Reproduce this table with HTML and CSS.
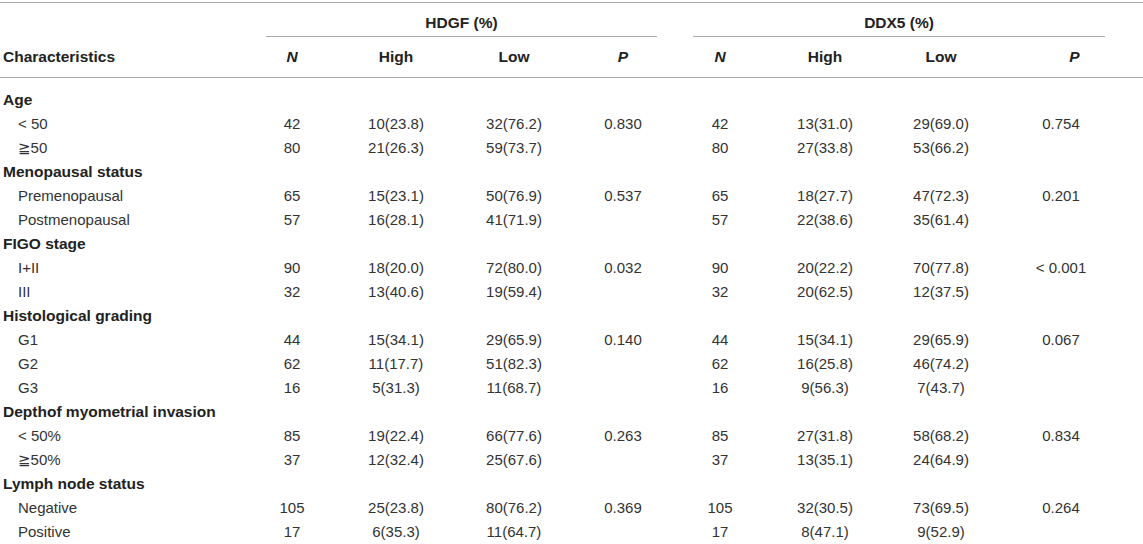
FILE: index.html
```html
<!DOCTYPE html>
<html lang="en">
  <head>
    <meta charset="UTF-8" />
    <meta name="viewport" content="width=device-width, initial-scale=1.0" />
    <title>HDGF and DDX5 expression</title>
    <link rel="stylesheet" href="styles.css">
  </head>
  <body>
    <table class="stats">
      <colgroup>
        <col class="col-char" />
        <col class="col-n1" />
        <col class="col-high1" />
        <col class="col-low1" />
        <col class="col-p1" />
        <col class="col-n2" />
        <col class="col-high2" />
        <col class="col-low2" />
        <col class="col-p2" />
      </colgroup>
      <thead>
        <tr class="group-row">
          <th></th>
          <th colspan="4"><div class="group group-hdgf">HDGF (%)</div></th>
          <th colspan="4"><div class="group group-ddx5">DDX5 (%)</div></th>
        </tr>
        <tr class="head-row">
          <th class="label">Characteristics</th>
          <th><em>N</em></th>
          <th>High</th>
          <th>Low</th>
          <th><em>P</em></th>
          <th><em>N</em></th>
          <th>High</th>
          <th>Low</th>
          <th class="last"><em>P</em></th>
        </tr>
      </thead>
      <tbody>
        <tr class="section first">
          <td class="label" colspan="9">Age</td>
        </tr>
        <tr>
          <td class="sub">&lt; 50</td>
          <td>42</td><td>10(23.8)</td><td>32(76.2)</td><td>0.830</td>
          <td>42</td><td>13(31.0)</td><td>29(69.0)</td><td class="last">0.754</td>
        </tr>
        <tr>
          <td class="sub">&#8807;50</td>
          <td>80</td><td>21(26.3)</td><td>59(73.7)</td><td></td>
          <td>80</td><td>27(33.8)</td><td>53(66.2)</td><td class="last"></td>
        </tr>

        <tr class="section">
          <td class="label" colspan="9">Menopausal status</td>
        </tr>
        <tr>
          <td class="sub">Premenopausal</td>
          <td>65</td><td>15(23.1)</td><td>50(76.9)</td><td>0.537</td>
          <td>65</td><td>18(27.7)</td><td>47(72.3)</td><td class="last">0.201</td>
        </tr>
        <tr>
          <td class="sub">Postmenopausal</td>
          <td>57</td><td>16(28.1)</td><td>41(71.9)</td><td></td>
          <td>57</td><td>22(38.6)</td><td>35(61.4)</td><td class="last"></td>
        </tr>

        <tr class="section">
          <td class="label" colspan="9">FIGO stage</td>
        </tr>
        <tr>
          <td class="sub">I+II</td>
          <td>90</td><td>18(20.0)</td><td>72(80.0)</td><td>0.032</td>
          <td>90</td><td>20(22.2)</td><td>70(77.8)</td><td class="last">&lt; 0.001</td>
        </tr>
        <tr>
          <td class="sub">III</td>
          <td>32</td><td>13(40.6)</td><td>19(59.4)</td><td></td>
          <td>32</td><td>20(62.5)</td><td>12(37.5)</td><td class="last"></td>
        </tr>

        <tr class="section">
          <td class="label" colspan="9">Histological grading</td>
        </tr>
        <tr>
          <td class="sub">G1</td>
          <td>44</td><td>15(34.1)</td><td>29(65.9)</td><td>0.140</td>
          <td>44</td><td>15(34.1)</td><td>29(65.9)</td><td class="last">0.067</td>
        </tr>
        <tr>
          <td class="sub">G2</td>
          <td>62</td><td>11(17.7)</td><td>51(82.3)</td><td></td>
          <td>62</td><td>16(25.8)</td><td>46(74.2)</td><td class="last"></td>
        </tr>
        <tr>
          <td class="sub">G3</td>
          <td>16</td><td>5(31.3)</td><td>11(68.7)</td><td></td>
          <td>16</td><td>9(56.3)</td><td>7(43.7)</td><td class="last"></td>
        </tr>

        <tr class="section">
          <td class="label" colspan="9">Depthof myometrial invasion</td>
        </tr>
        <tr>
          <td class="sub">&lt; 50%</td>
          <td>85</td><td>19(22.4)</td><td>66(77.6)</td><td>0.263</td>
          <td>85</td><td>27(31.8)</td><td>58(68.2)</td><td class="last">0.834</td>
        </tr>
        <tr>
          <td class="sub">&#8807;50%</td>
          <td>37</td><td>12(32.4)</td><td>25(67.6)</td><td></td>
          <td>37</td><td>13(35.1)</td><td>24(64.9)</td><td class="last"></td>
        </tr>

        <tr class="section">
          <td class="label" colspan="9">Lymph node status</td>
        </tr>
        <tr>
          <td class="sub">Negative</td>
          <td>105</td><td>25(23.8)</td><td>80(76.2)</td><td>0.369</td>
          <td>105</td><td>32(30.5)</td><td>73(69.5)</td><td class="last">0.264</td>
        </tr>
        <tr>
          <td class="sub">Positive</td>
          <td>17</td><td>6(35.3)</td><td>11(64.7)</td><td></td>
          <td>17</td><td>8(47.1)</td><td>9(52.9)</td><td class="last"></td>
        </tr>
      </tbody>
    </table>
  </body>
</html>
```

FILE: styles.css
```css
body {
  margin: 0;
  padding: 2px 0 0;
  background-color: #fff;
  font-family: "Liberation Sans", Arial, "DejaVu Sans", sans-serif;
  font-size: 15px;
  color: #333;
}

.stats {
  width: 1143px;
  table-layout: fixed;
  border-collapse: collapse;
  border-top: 1px solid #ababab;
}

.col-char { width: 240px; }
.col-n1 { width: 104px; }
.col-high1 { width: 104px; }
.col-low1 { width: 132px; }
.col-p1 { width: 86px; }
.col-n2 { width: 108px; }
.col-high2 { width: 102px; }
.col-low2 { width: 130px; }
.col-p2 { width: 137px; }

th,
td {
  padding: 0;
  text-align: center;
  white-space: nowrap;
  line-height: 18px;
}

th {
  font-size: 15.5px;
  font-weight: bold;
  color: #222;
}

th em {
  font-style: italic;
}

/* first header row: group titles with short rules */
.group-row th {
  padding-top: 11px;
  vertical-align: bottom;
}

.group {
  padding-bottom: 4px;
  border-bottom: 1px solid #ababab;
}

.group-hdgf {
  margin: 0 9px 0 26px;
}

.group-ddx5 {
  margin: 0 38px 0 27px;
}

.head-row th {
  padding: 11px 0;
  border-bottom: 1px solid #ababab;
}

.head-row .label,
.label {
  text-align: left;
  padding-left: 3px;
}

.section .label {
  font-size: 15.5px;
  font-weight: bold;
  color: #222;
}

td {
  height: 24px;
  line-height: 24px;
}

.section.first td {
  padding-top: 10px;
}

.sub {
  text-align: left;
  padding-left: 18px;
}

.last {
  padding-right: 27px;
}
```
